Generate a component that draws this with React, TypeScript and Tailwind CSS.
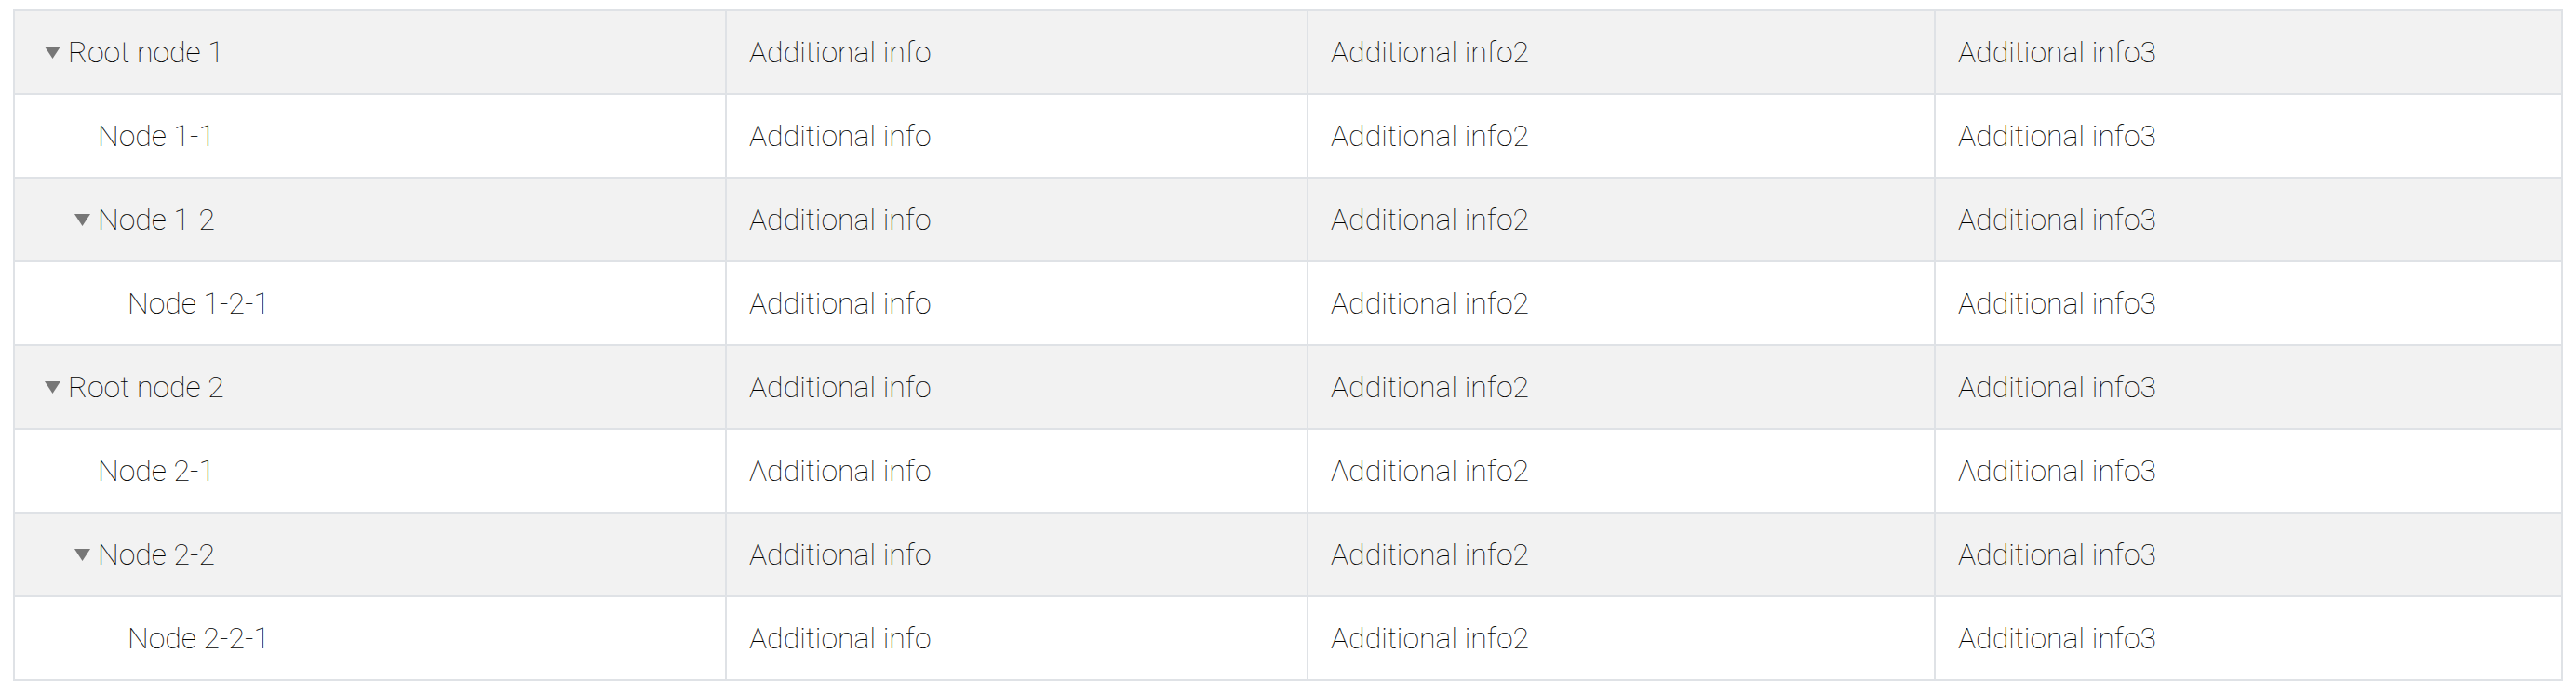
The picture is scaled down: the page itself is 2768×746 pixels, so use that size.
import React from 'react';

type Row = { label: string; level: number; expandable: boolean };

const rows: Row[] = [
  { label: 'Root node 1', level: 0, expandable: true },
  { label: 'Node 1-1', level: 1, expandable: false },
  { label: 'Node 1-2', level: 1, expandable: true },
  { label: 'Node 1-2-1', level: 2, expandable: false },
  { label: 'Root node 2', level: 0, expandable: true },
  { label: 'Node 2-1', level: 1, expandable: false },
  { label: 'Node 2-2', level: 1, expandable: true },
  { label: 'Node 2-2-1', level: 2, expandable: false },
];

const indent = ['pl-8', 'pl-16', 'pl-24'];

const Caret: React.FC = () => (
  <svg width="17" height="13" viewBox="0 0 17 13" className="block">
    <path d="M0 0 H17 L8.5 13 Z" fill="#777" />
  </svg>
);

export default function App() {
  return (
    <div className="pl-[14px] pt-[10px] font-['Roboto',sans-serif] font-thin text-[32px] text-black">
      <div className="w-[2740px] border-2 border-[#dfe2e6]">
        {rows.map((row, i) => (
          <div
            key={row.label}
            className={`grid grid-cols-[763px_625px_674px_674px] ${i > 0 ? 'h-[90px] border-t-2 border-[#dfe2e6]' : 'h-[88px]'} ${i % 2 === 0 ? 'bg-[#f2f2f2]' : 'bg-white'}`}
          >
            <div className={`flex items-center ${indent[row.level]}`}>
              <span className="w-[25px] flex items-center">{row.expandable && <Caret />}</span>
              <span>{row.label}</span>
            </div>
            <div className="flex items-center border-l-2 border-[#dfe2e6] px-6">Additional info</div>
            <div className="flex items-center border-l-2 border-[#dfe2e6] px-6">Additional info2</div>
            <div className="flex items-center border-l-2 border-[#dfe2e6] px-6">Additional info3</div>
          </div>
        ))}
      </div>
    </div>
  );
}
